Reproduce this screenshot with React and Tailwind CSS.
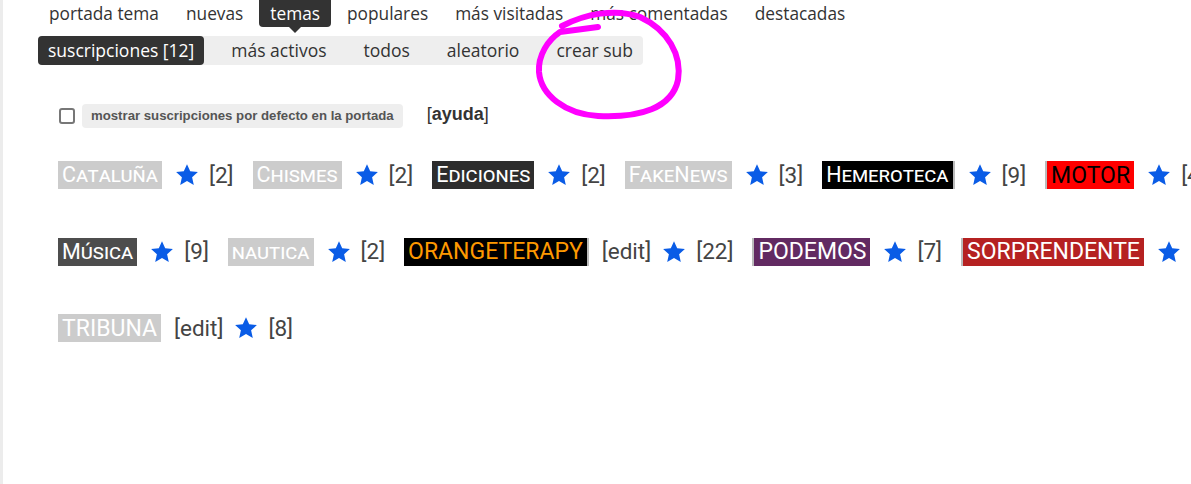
import React from "react";

const topNav = ["portada tema", "nuevas", "temas", "populares", "más visitadas", "más comentadas", "destacadas"];
const subNav = ["suscripciones [12]", "más activos", "todos", "aleatorio", "crear sub"];

const subs = [
  { name: "Cataluña", cls: "bg-[#cccccc] text-white", caps: true, count: 2 },
  { name: "Chismes", cls: "bg-[#cccccc] text-white", caps: true, count: 2 },
  { name: "Ediciones", cls: "bg-[#2d2d2d] text-white", caps: true, count: 2 },
  { name: "FakeNews", cls: "bg-[#cccccc] text-white", caps: true, count: 3 },
  { name: "Hemeroteca", cls: "bg-black text-white border-r-2 border-[#bbbbbb]", caps: true, count: 9 },
  { name: "MOTOR", cls: "bg-[#ff0000] text-black border-l-2 border-[#bbbbbb]", caps: false, count: 4 },
  { name: "Música", cls: "bg-[#4d4d4d] text-white", caps: true, count: 9 },
  { name: "nautica", cls: "bg-[#cccccc] text-white", caps: true, count: 2 },
  { name: "ORANGETERAPY", cls: "bg-black text-[#ff9900] border-r-2 border-[#bbbbbb]", caps: false, count: 22, edit: true },
  { name: "PODEMOS", cls: "bg-[#622a62] text-white border-l-2 border-[#bbbbbb]", caps: false, count: 7 },
  { name: "SORPRENDENTE", cls: "bg-[#b52121] text-white border-l-2 border-[#bbbbbb]", caps: false, count: 5 },
  { name: "TRIBUNA", cls: "bg-[#cccccc] text-white", caps: false, count: 8, edit: true },
];

function Star() {
  return (
    <svg width="24" height="24" viewBox="0 0 24 24" className="block shrink-0">
      <path
        d="M12 1.2l3.2 7.1 7.7.8-5.8 5.2 1.7 7.6L12 18l-6.8 3.9 1.7-7.6L1.1 9.1l7.7-.8z"
        fill="#0a5ce6"
      />
    </svg>
  );
}

export default function App() {
  return (
    <div className="relative flex h-[484px] w-[1191px] overflow-hidden bg-white">
      <div className="w-[3px] shrink-0 bg-[#ececec]" />
      <div className="flex min-w-0 flex-1 flex-col">
        {/* main navigation */}
        <nav className="ml-[35px] flex h-[27px] items-center gap-[5px] font-['Open_Sans',sans-serif] text-[17.3px] text-[#333]">
          {topNav.map((t) =>
            t === "temas" ? (
              <span key={t} className="relative flex h-[27px] items-center rounded-b-[4px] bg-[#333] px-[11px] text-white">
                {t}
                <span className="absolute left-1/2 top-[27px] h-0 w-0 -translate-x-1/2 border-x-[6px] border-t-[6px] border-x-transparent border-t-[#333]" />
              </span>
            ) : (
              <span key={t} className="px-[11px]">{t}</span>
            )
          )}
        </nav>

        {/* sub navigation */}
        <div className="ml-[35px] mt-[9px] flex h-[29px] w-fit items-center gap-[17px] rounded-[4px] bg-[#eeeeee] font-['Open_Sans',sans-serif] text-[17.5px] text-[#333]">
          {subNav.map((t, i) => (
            <span
              key={t}
              className={
                i === 0
                  ? "flex h-[29px] items-center rounded-[4px] bg-[#333] px-[10px] text-white"
                  : "px-[10px]"
              }
            >
              {t}
            </span>
          ))}
        </div>

        {/* default-subscriptions toggle */}
        <div className="ml-[56px] mt-[39px] flex items-center font-['Liberation_Sans',Arial,sans-serif]">
          <span className="h-[16px] w-[16px] rounded-[3px] border-2 border-[#777] bg-white" />
          <span className="ml-[7px] flex h-[24px] items-center rounded-[4px] bg-[#eeeeee] px-[9px] text-[13.2px] font-bold text-[#555]">
            mostrar suscripciones por defecto en la portada
          </span>
          <span className="ml-[24px] -mt-[3px] text-[18px] text-[#333]">
            [<b>ayuda</b>]
          </span>
        </div>

        {/* subscribed subs */}
        <div className="ml-[55px] mt-[33px] flex w-[1300px] flex-wrap items-center gap-y-[48.5px] font-['Roboto',sans-serif] text-[22.5px] leading-none text-[#444]">
          {subs.map((s) => (
            <div key={s.name} className="mr-[19px] flex h-[28px] items-center whitespace-nowrap">
              <span
                className={`flex h-[28px] items-center px-[4px] ${s.cls} ${
                  s.caps ? "text-[21.5px] [font-variant-caps:small-caps]" : "text-[23px]"
                }`}
              >
                {s.name}
              </span>
              {s.edit && <span className="ml-[13px]">[edit]</span>}
              <span className={`flex ${s.edit ? "ml-[11px]" : "ml-[13px]"}`}>
                <Star />
              </span>
              <span className="ml-[10px]">[{s.count}]</span>
            </div>
          ))}
        </div>
      </div>

      {/* hand-drawn highlight around "crear sub" */}
      <svg className="pointer-events-none absolute left-0 top-0" width="1191" height="484">
        <path
          d="M 598 27 L 560 32 C 548 40, 538 55, 539 72 C 541 95, 565 114, 598 116 C 640 118, 672 108, 678 80 C 682 55, 668 30, 640 17 C 615 8, 585 14, 562 26"
          fill="none"
          stroke="#ff00ff"
          strokeWidth="6"
          strokeLinecap="round"
          strokeLinejoin="round"
        />
      </svg>
    </div>
  );
}
